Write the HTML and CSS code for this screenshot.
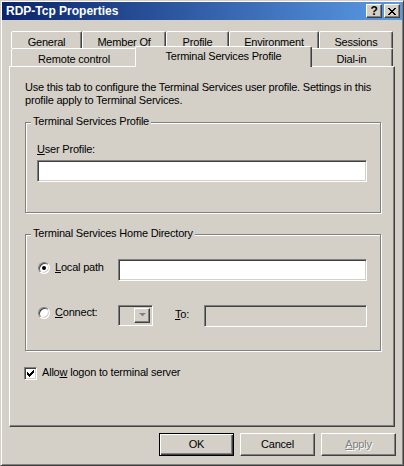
FILE: index.html
```html
<!DOCTYPE html>
<html>
<head>
<meta charset="utf-8">
<title>RDP-Tcp Properties</title>
<link rel="stylesheet" href="styles.css">
</head>
<body>
<div class="window">
  <div class="titlebar">
    <span class="title">RDP-Tcp Properties</span>
    <div class="tbtns">
      <span class="tbtn help">?</span>
      <span class="tbtn close"><svg width="8" height="7" viewBox="0 0 8 7"><path d="M0 0h2v1h1v1h2V1h1V0h2v1H7v1H6v1H5v1h1v1h1v1h1v1H6V6H5V5H3v1H2v1H0V6h1V5h1V4h1V3H2V2H1V1H0z" fill="#000"/></svg></span>
    </div>
  </div>
  <div class="content">
    <div class="tabs">
      <div class="tabrow back">
        <div class="tab t-general">General</div>
        <div class="tab t-member">Member Of</div>
        <div class="tab t-profile">Profile</div>
        <div class="tab t-env">Environment</div>
        <div class="tab t-sessions">Sessions</div>
      </div>
      <div class="tabrow front">
        <div class="tab t-remote">Remote control</div>
        <div class="tab t-tsp active">Terminal Services Profile</div>
        <div class="tab t-dial">Dial-in</div>
      </div>
    </div>
    <div class="panel">
      <p class="desc">Use this tab to configure the Terminal Services user profile. Settings in this<br>profile apply to Terminal Services.</p>
      <div class="group g1">
        <span class="legend">Terminal Services Profile</span>
        <div class="label"><u>U</u>ser Profile:</div>
        <div class="edit e-profile"></div>
      </div>
      <div class="group g2">
        <span class="legend">Terminal Services Home Directory</span>
        <div class="row r-local">
          <span class="radio checked"></span>
          <span class="rlabel"><u>L</u>ocal path</span>
          <div class="edit e-local"></div>
        </div>
        <div class="row r-connect">
          <span class="radio"></span>
          <span class="rlabel"><u>C</u>onnect:</span>
          <div class="combo"><span class="cbtn"><svg width="7" height="5" viewBox="0 0 7 5"><path d="M1 1h5L3.5 3.5z" fill="#fff"/><path d="M0 0h7L3.5 3.5z" fill="#808080"/></svg></span></div>
          <span class="tolabel"><u>T</u>o:</span>
          <div class="edit e-to"></div>
        </div>
      </div>
      <div class="check-row">
        <span class="checkbox"><svg width="7" height="7" viewBox="0 0 7 7"><path d="M6 0h1v3H6v1H5v1H4v1H3v1H2V6H1V5H0V2h1v1h1v1h1V3h1V2h1V1h1z" fill="#000"/></svg></span>
        <span class="clabel">Allo<u>w</u> logon to terminal server</span>
      </div>
    </div>
    <div class="buttons">
      <div class="btn default">OK</div>
      <div class="btn">Cancel</div>
      <div class="btn disabled"><u>A</u>pply</div>
    </div>
  </div>
</div>
</body>
</html>
```
FILE: styles.css
```css
* { box-sizing: border-box; }
html, body { margin: 0; padding: 0; }
body {
  width: 404px;
  height: 466px;
  background: #D4D0C8;
  font-family: "Liberation Sans", Arial, sans-serif;
  font-size: 11px;
  line-height: 13px;
  letter-spacing: -0.2px;
  color: #000;
  overflow: hidden;
}
u { text-decoration: underline; text-underline-offset: 1px; }

.window {
  width: 404px;
  height: 466px;
  border: 1px solid;
  border-color: #D4D0C8 #404040 #404040 #D4D0C8;
  box-shadow: inset 1px 1px #fff, inset -1px -1px #808080;
  padding: 1px;
  background: #D4D0C8;
}

.titlebar {
  height: 18px;
  background: linear-gradient(to right, #0A246A, #5B9BE6);
  display: flex;
  align-items: center;
  justify-content: space-between;
  padding: 0 2px 0 4px;
}
.title {
  color: #fff;
  font-weight: bold;
  font-size: 12px;
  letter-spacing: 0;
}
.tbtns { display: flex; gap: 2px; }
.tbtn {
  width: 16px;
  height: 14px;
  background: #D4D0C8;
  border: 1px solid;
  border-color: #fff #404040 #404040 #fff;
  box-shadow: inset -1px -1px #808080;
  display: flex;
  align-items: center;
  justify-content: center;
  font-weight: bold;
  font-size: 12px;
  line-height: 12px;
}

.content { padding-top: 11px; }

.tabs { margin-left: 9px; width: 382px; }
.tabrow { display: flex; }
.tabrow.back { height: 17px; }
.tabrow.front { height: 18px; }
.tab {
  border: 1px solid;
  border-bottom: none;
  border-color: #fff #404040 transparent #fff;
  box-shadow: inset -1px 0 #808080;
  border-radius: 2px 2px 0 0;
  text-align: center;
  padding-top: 4px;
  line-height: 12px;
  background: #D4D0C8;
  white-space: nowrap;
}
.back .tab { height: 17px; }
.front .tab { height: 18px; }
.tab.active {
  height: 21px;
  margin: -2px -2px -1px -2px;
  padding-top: 3px;
  position: relative;
  z-index: 1;
}
.t-general { width: 71px; }
.t-member { width: 84px; }
.t-profile { width: 63px; }
.t-env { width: 90px; }
.t-sessions { width: 74px; }
.t-remote { width: 126px; }
.t-tsp { width: 177px; }
.t-dial { width: 83px; }

.panel {
  margin-left: 7px;
  width: 386px;
  height: 361px;
  border: 1px solid;
  border-color: #fff #404040 #404040 #fff;
  box-shadow: inset -1px -1px #808080;
  padding: 14px 0 0 15px;
}
.desc { margin: 0; }

.group {
  position: relative;
  width: 356px;
  border: 1px solid #808080;
  box-shadow: inset 1px 1px #fff, 1px 1px #fff;
}
.legend {
  position: absolute;
  top: -8px;
  left: 5px;
  padding: 0 2px;
  background: #D4D0C8;
}
.g1 { height: 91px; margin-top: 15px; padding: 20px 0 0 11px; }
.g2 { height: 117px; margin-top: 21px; padding: 24px 0 0 12px; }

.edit {
  height: 22px;
  background: #fff;
  border: 1px solid;
  border-color: #808080 #fff #fff #808080;
  box-shadow: inset 1px 1px #404040, inset -1px -1px #D4D0C8;
}
.label { margin-bottom: 4px; }
.e-profile { width: 330px; }

.row { display: flex; align-items: flex-start; }
.r-local { height: 22px; }
.r-connect { margin-top: 24px; height: 22px; }
.radio {
  position: relative;
  width: 12px;
  height: 12px;
  flex: none;
  border-radius: 50%;
  background: #fff;
  border: 1px solid;
  border-color: #808080 #fff #fff #808080;
  box-shadow: inset 1px 1px #404040, inset -1px -1px #D4D0C8;
}
.r-local .radio { margin-top: 3px; }
.r-connect .radio { margin-top: 2px; }
.radio.checked::after {
  content: "";
  position: absolute;
  left: 3px;
  top: 3px;
  width: 4px;
  height: 4px;
  border-radius: 50%;
  background: #000;
}
.rlabel { margin-left: 5px; width: 63px; flex: none; }
.r-local .rlabel { margin-top: 2px; }
.r-connect .rlabel { margin-top: 1px; }
.e-local { width: 249px; }

.combo {
  width: 35px;
  height: 21px;
  flex: none;
  background: #D4D0C8;
  border: 1px solid;
  border-color: #808080 #fff #fff #808080;
  box-shadow: inset 1px 1px #404040, inset -1px -1px #D4D0C8;
  display: flex;
  justify-content: flex-end;
  padding: 2px;
}
.cbtn {
  width: 16px;
  height: 15px;
  border: 1px solid;
  border-color: #fff #404040 #404040 #fff;
  box-shadow: inset -1px -1px #808080;
  display: flex;
  align-items: center;
  justify-content: center;
}
.tolabel { margin-left: 22px; width: 29px; flex: none; margin-top: 3px; }
.e-to { width: 163px; background: #D4D0C8; }

.check-row { display: flex; align-items: flex-start; margin-top: 15px; margin-left: -1px; }
.checkbox {
  width: 13px;
  height: 13px;
  flex: none;
  margin-top: 1px;
  background: #fff;
  border: 1px solid;
  border-color: #808080 #fff #fff #808080;
  box-shadow: inset 1px 1px #404040, inset -1px -1px #D4D0C8;
  display: flex;
  align-items: center;
  justify-content: center;
}
.clabel { margin-left: 5px; }

.buttons {
  display: flex;
  justify-content: flex-end;
  gap: 6px;
  margin-top: 6px;
  padding-right: 6px;
}
.btn {
  width: 75px;
  height: 23px;
  border: 1px solid;
  border-color: #fff #404040 #404040 #fff;
  box-shadow: inset -1px -1px #808080;
  text-align: center;
  line-height: 20px;
}
.btn.default {
  border-color: #000;
  box-shadow: inset 1px 1px #fff, inset -1px -1px #404040, inset -2px -2px #808080;
}
.btn.disabled {
  color: #808080;
  text-shadow: 1px 1px #fff;
}
```
